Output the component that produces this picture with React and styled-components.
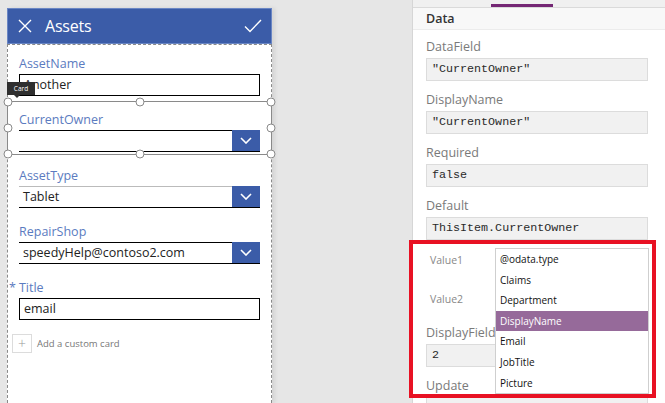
import React from 'react'
import styled, { createGlobalStyle } from 'styled-components'

const BLUE = '#3b5ca8'
const LABEL = '#5b7bc0'

const GlobalStyle = createGlobalStyle`
  html, body { margin: 0; padding: 0; }
  body {
    background: #e6e6e6;
    font-family: "Open Sans", "Noto Sans", sans-serif;
    overflow: hidden;
  }
  * { box-sizing: border-box; }
`

const Page = styled.div`
  display: flex;
  width: 665px;
  height: 403px;
`

const Canvas = styled.div`
  width: 412px;
  height: 100%;
  padding: 8px 0 0 7px;
`

const FormFrame = styled.div`
  width: 265px;
  height: 100%;
  display: flex;
  flex-direction: column;
  box-shadow: 3px 0 4px rgba(0, 0, 0, 0.08);
`

const Header = styled.div`
  height: 36px;
  background: ${BLUE};
  border: 1px solid #6a86c4;
  display: flex;
  align-items: center;
  padding: 0 9px 0 9px;
  color: #fff;
`

const HeaderTitle = styled.div`
  flex: 1;
  font-size: 16px;
  margin-left: 12px;
  letter-spacing: -0.2px;
`

const FormBody = styled.div`
  flex: 1;
  background: #fff;
  border: 1px dashed #8a8a8a;
  border-bottom: none;
`

const Card = styled.div`
  position: relative;
  height: 56px;
  padding: 10px 11px 0 11px;
`

const Label = styled.div`
  font-size: 12.5px;
  line-height: 17px;
  height: 17px;
  color: ${LABEL};
  margin-bottom: 2px;
  white-space: nowrap;
`

const Star = styled.span`
  margin-left: -10px;
  margin-right: 3px;
`

const TextInput = styled.div`
  height: 22px;
  border: 1px solid #000;
  font-size: 12.5px;
  line-height: 20px;
  padding-left: 4px;
  color: #222;
`

const Dropdown = styled.div`
  height: 22px;
  display: flex;
`

const DropValue = styled.div`
  flex: 1;
  border-top: 1px solid ${(p) => (p.$faint ? '#bbb' : '#000')};
  border-bottom: 1px solid #000;
  font-size: 12.5px;
  line-height: 20px;
  padding-left: 4px;
  color: #222;
`

const DropButton = styled.div`
  width: 28px;
  background: ${BLUE};
  display: flex;
  align-items: center;
  justify-content: center;
  border-bottom: 1px solid #000;
`

const Selection = styled.div`
  position: absolute;
  left: -1px;
  right: -1px;
  top: 0;
  bottom: 2px;
  border: 1px solid #8a8a8a;
  pointer-events: none;
`

const Handle = styled.div`
  position: absolute;
  width: 9px;
  height: 9px;
  border-radius: 50%;
  background: #fff;
  border: 1px solid #8a8a8a;
  left: ${(p) => p.$x};
  top: ${(p) => p.$y};
  transform: translate(-50%, -50%);
`

const Tip = styled.div`
  position: absolute;
  left: -1px;
  top: -20px;
  width: 28px;
  height: 13px;
  background: #2f2f2f;
  color: #fff;
  font-size: 6.5px;
  line-height: 13px;
  text-align: center;
  &::after {
    content: '';
    position: absolute;
    left: 7px;
    bottom: -3px;
    border-left: 3px solid transparent;
    border-right: 3px solid transparent;
    border-top: 3px solid #2f2f2f;
  }
`

const AddCard = styled.div`
  display: flex;
  align-items: center;
  margin: 9px 0 0 4px;
  gap: 5px;
  font-size: 9.5px;
  color: #777;
`

const PlusBox = styled.div`
  width: 20px;
  height: 19px;
  border: 1px solid #dcdcdc;
  display: flex;
  align-items: center;
  justify-content: center;
  color: #999;
  font-size: 14px;
  font-weight: 300;
`

const Panel = styled.div`
  flex: 1;
  position: relative;
  background: #fff;
  border-left: 1px solid #d6d6d6;
`

const TabStrip = styled.div`
  height: 8px;
  background: #f0f0f0;
  border-bottom: 1px solid #dadada;
  padding-left: 78px;
`

const Tab = styled.div`
  width: 62px;
  height: 7px;
  border-bottom: 3px solid ${(p) => (p.$active ? '#742774' : 'transparent')};
`

const SectionHead = styled.div`
  height: 22px;
  background: #f8f8f8;
  border-bottom: 1px solid #ececec;
  padding-left: 13px;
  font-size: 12.5px;
  font-weight: 600;
  line-height: 22px;
  color: #333;
`

const Props = styled.div`
  padding: 8px 17px 0 13px;
`

const PropLabel = styled.div`
  font-size: 12.5px;
  line-height: 17px;
  color: #7a7a7a;
  margin-top: ${(p) => p.$mt ?? 10}px;
  white-space: nowrap;
`

const PropBox = styled.div`
  height: 23px;
  margin-top: 3px;
  background: #f1f1f1;
  border: 1px solid #dcdcdc;
  font-family: "Liberation Mono", "DejaVu Sans Mono", monospace;
  font-size: 11.7px;
  line-height: 21px;
  padding-left: 5px;
  color: #2a2a2a;
`

const ValueRow = styled.div`
  height: 39px;
  display: flex;
  align-items: center;
  padding-left: 4px;
  font-size: 10.5px;
  color: #888;
`

const Highlight = styled.div`
  position: absolute;
  left: -4px;
  top: 240px;
  width: 247px;
  height: 158px;
  border: 4px solid #e81123;
  z-index: 2;
  pointer-events: none;
`

const List = styled.div`
  position: absolute;
  left: 82px;
  top: 248px;
  width: 154px;
  background: #fff;
  border: 1px solid #cfcfcf;
  z-index: 1;
`

const ListItem = styled.div`
  height: 20.6px;
  line-height: 20.6px;
  padding-left: 4px;
  font-size: 10px;
  color: ${(p) => (p.$selected ? '#fff' : '#111')};
  background: ${(p) => (p.$selected ? '#966a9a' : 'transparent')};
`

const CloseIcon = () => (
  <svg width="16" height="16" viewBox="0 0 16 16">
    <path d="M2 2 L14 14 M14 2 L2 14" stroke="#fff" strokeWidth="1.4" fill="none" />
  </svg>
)

const CheckIcon = () => (
  <svg width="18" height="14" viewBox="0 0 18 14">
    <path d="M1 7.5 L6 12.5 L17 1" stroke="#fff" strokeWidth="1.4" fill="none" />
  </svg>
)

const Chevron = () => (
  <svg width="12" height="7" viewBox="0 0 12 7">
    <path d="M1 1 L6 6 L11 1" stroke="#fff" strokeWidth="1.6" fill="none" />
  </svg>
)

const handles = [
  ['0%', '0%'], ['50%', '0%'], ['100%', '0%'],
  ['0%', '50%'], ['100%', '50%'],
  ['0%', '100%'], ['50%', '100%'], ['100%', '100%'],
]

const fields = ['@odata.type', 'Claims', 'Department', 'DisplayName', 'Email', 'JobTitle', 'Picture']

function DropField({ label, value, faint }) {
  return (
    <Card>
      <Label>{label}</Label>
      <Dropdown>
        <DropValue $faint={faint}>{value}</DropValue>
        <DropButton><Chevron /></DropButton>
      </Dropdown>
    </Card>
  )
}

export default function App() {
  return (
    <Page>
      <GlobalStyle />
      <Canvas>
        <FormFrame>
          <Header>
            <CloseIcon />
            <HeaderTitle>Assets</HeaderTitle>
            <CheckIcon />
          </Header>
          <FormBody>
            <Card>
              <Label>AssetName</Label>
              <TextInput>Another</TextInput>
            </Card>
            <Card>
              <Label>CurrentOwner</Label>
              <Dropdown>
                <DropValue />
                <DropButton><Chevron /></DropButton>
              </Dropdown>
              <Selection>
                {handles.map(([x, y]) => (
                  <Handle key={x + y} $x={x} $y={y} />
                ))}
                <Tip>Card</Tip>
              </Selection>
            </Card>
            <DropField label="AssetType" value="Tablet" faint />
            <DropField label="RepairShop" value="speedyHelp@contoso2.com" />
            <Card>
              <Label><Star>*</Star>Title</Label>
              <TextInput>email</TextInput>
            </Card>
            <AddCard>
              <PlusBox>+</PlusBox>
              Add a custom card
            </AddCard>
          </FormBody>
        </FormFrame>
      </Canvas>
      <Panel>
        <TabStrip>
          <Tab $active />
        </TabStrip>
        <SectionHead>Data</SectionHead>
        <Props>
          <PropLabel $mt={0}>DataField</PropLabel>
          <PropBox>"CurrentOwner"</PropBox>
          <PropLabel>DisplayName</PropLabel>
          <PropBox>"CurrentOwner"</PropBox>
          <PropLabel>Required</PropLabel>
          <PropBox>false</PropBox>
          <PropLabel>Default</PropLabel>
          <PropBox>ThisItem.CurrentOwner</PropBox>
          <ValueRow>Value1</ValueRow>
          <ValueRow>Value2</ValueRow>
          <PropLabel $mt={6}>DisplayFields</PropLabel>
          <PropBox>2</PropBox>
          <PropLabel>Update</PropLabel>
          <PropBox>Patch(CurrentOwner)</PropBox>
        </Props>
        <Highlight />
        <List>
          {fields.map((f) => (
            <ListItem key={f} $selected={f === 'DisplayName'}>{f}</ListItem>
          ))}
        </List>
      </Panel>
    </Page>
  )
}
